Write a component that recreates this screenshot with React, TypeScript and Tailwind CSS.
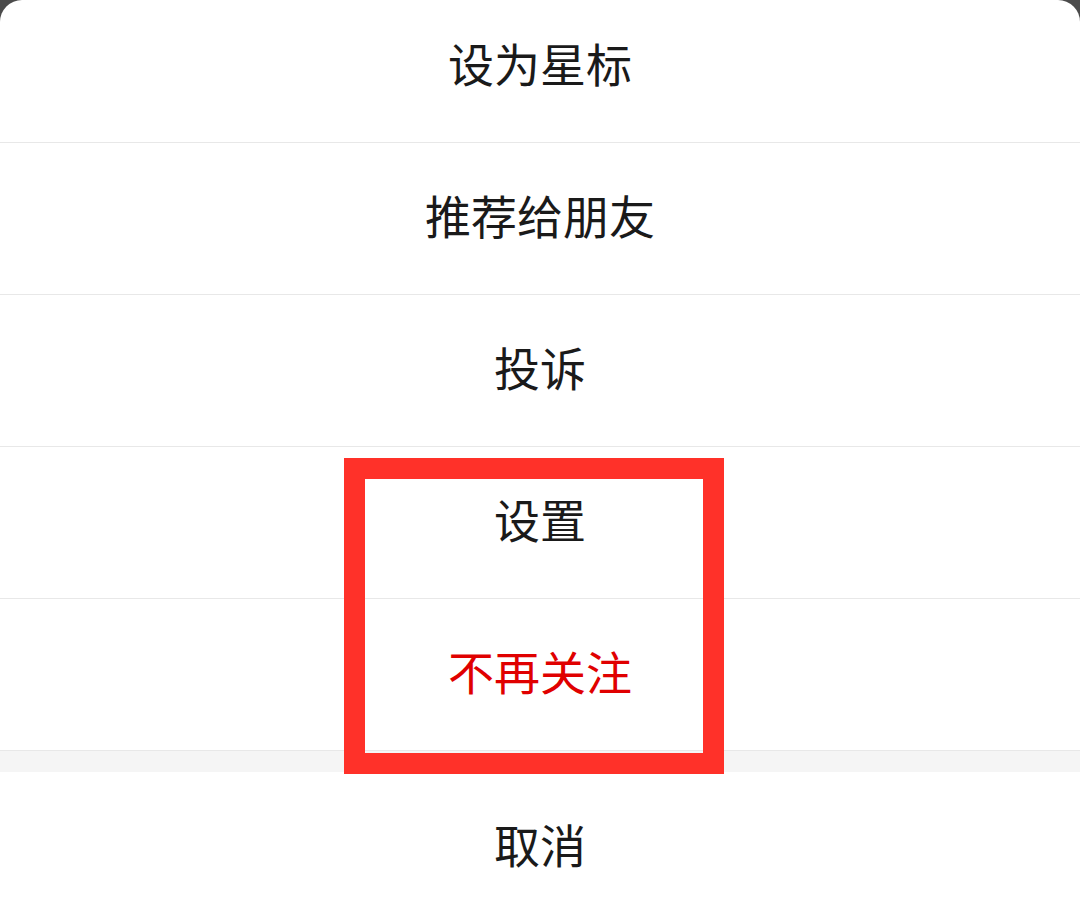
const items = [
  { label: '设为星标', first: true },
  { label: '推荐给朋友' },
  { label: '投诉' },
  { label: '设置' },
  { label: '不再关注', danger: true },
];

export default function App() {
  return (
    <div
      className="relative w-[1080px] h-[924px] overflow-hidden bg-[#4b4b4b]"
      style={{ fontFamily: '"Noto Sans CJK SC", "Noto Sans", sans-serif' }}
    >
      <div className="flex flex-col bg-white rounded-t-[22px]">
        {items.map((item) => (
          <div
            key={item.label}
            className={`flex items-center justify-center border-b border-[#e8e8e8] text-[46px] leading-none ${
              item.first ? 'h-[143px] pb-[18px]' : 'h-[152px] pb-[10px]'
            } ${item.danger ? 'text-[#e00000]' : 'text-[#1a1a1a]'}`}
          >
            {item.label}
          </div>
        ))}
        <div className="h-[21px] bg-[#f5f5f5]" />
        <div className="flex items-center justify-center h-[152px] pb-[10px] text-[46px] leading-none text-[#1a1a1a]">
          取消
        </div>
      </div>
      <div className="absolute left-[344px] top-[458px] w-[380px] h-[316px] border-[21px] border-[#ff3129]" />
    </div>
  );
}
